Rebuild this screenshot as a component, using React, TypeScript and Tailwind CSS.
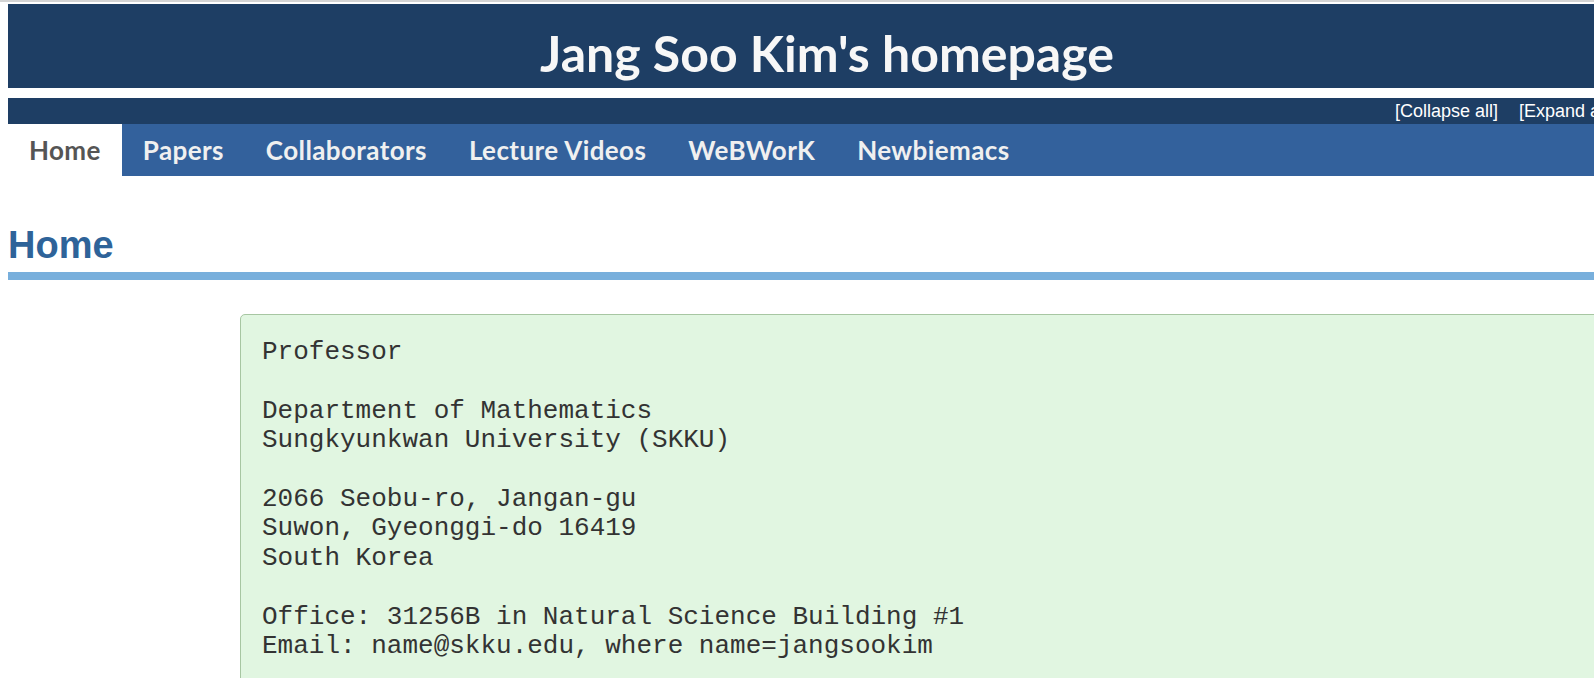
const navItems = ['Home', 'Papers', 'Collaborators', 'Lecture Videos', 'WeBWorK', 'Newbiemacs'];

const contact = [
  'Professor',
  '',
  'Department of Mathematics',
  'Sungkyunkwan University (SKKU)',
  '',
  '2066 Seobu-ro, Jangan-gu',
  'Suwon, Gyeonggi-do 16419',
  'South Korea',
  '',
  'Office: 31256B in Natural Science Building #1',
  'Email: name@skku.edu, where name=jangsookim',
];

export default function App() {
  return (
    <div className="w-full h-[678px] overflow-hidden bg-white">
      <div className="h-[2px] bg-[#d4d4d4]" />
      <div className="w-[1638px] ml-2 mt-[2px]">
        {/* Title banner */}
        <div className="h-[84px] bg-[#1e3e64] flex justify-center pt-[21px]">
          <h1 className="text-[#f7f7f7] text-[50px] leading-[56px] font-bold whitespace-nowrap font-['Lato','Open_Sans',sans-serif]">
            Jang Soo Kim's homepage
          </h1>
        </div>

        {/* Collapse / expand bar */}
        <div className="mt-[10px] h-[26px] bg-[#1e3e64] flex items-center justify-end pr-[33px] gap-[21px] text-white text-[18px] whitespace-nowrap font-['Liberation_Sans',Arial,sans-serif]">
          <span className="shrink-0">[Collapse all]</span>
          <span className="shrink-0">[Expand all]</span>
        </div>

        {/* Navigation */}
        <nav className="h-[52px] bg-[#33619c] flex">
          {navItems.map((item, i) => (
            <a
              key={item}
              href="#"
              className={`px-[21px] flex items-center text-[26px] tracking-[0.4px] font-bold whitespace-nowrap font-['Lato','Open_Sans',sans-serif] ${
                i === 0 ? 'bg-white text-[#555555]' : 'text-[#f0f0f0]'
              }`}
            >
              {item}
            </a>
          ))}
        </nav>

        {/* Page heading */}
        <h2 className="mt-[46px] text-[38px] leading-[46px] font-bold text-[#2e6399] font-['Liberation_Sans',Arial,sans-serif]">
          Home
        </h2>
        <div className="mt-[4px] h-2 bg-[#78afdc]" />

        {/* Contact box */}
        <div className="ml-[232px] mt-[34px] w-[1380px] rounded-[5px] border-[1.5px] border-[#a7c6a2] bg-[#e1f6e1] pl-[21px] pt-[23px] pb-6">
          <pre className="text-[26px] leading-[29.4px] text-[#333333] font-['Liberation_Mono','Courier_New',monospace]">
            {contact.join('\n')}
          </pre>
        </div>
      </div>
    </div>
  );
}
